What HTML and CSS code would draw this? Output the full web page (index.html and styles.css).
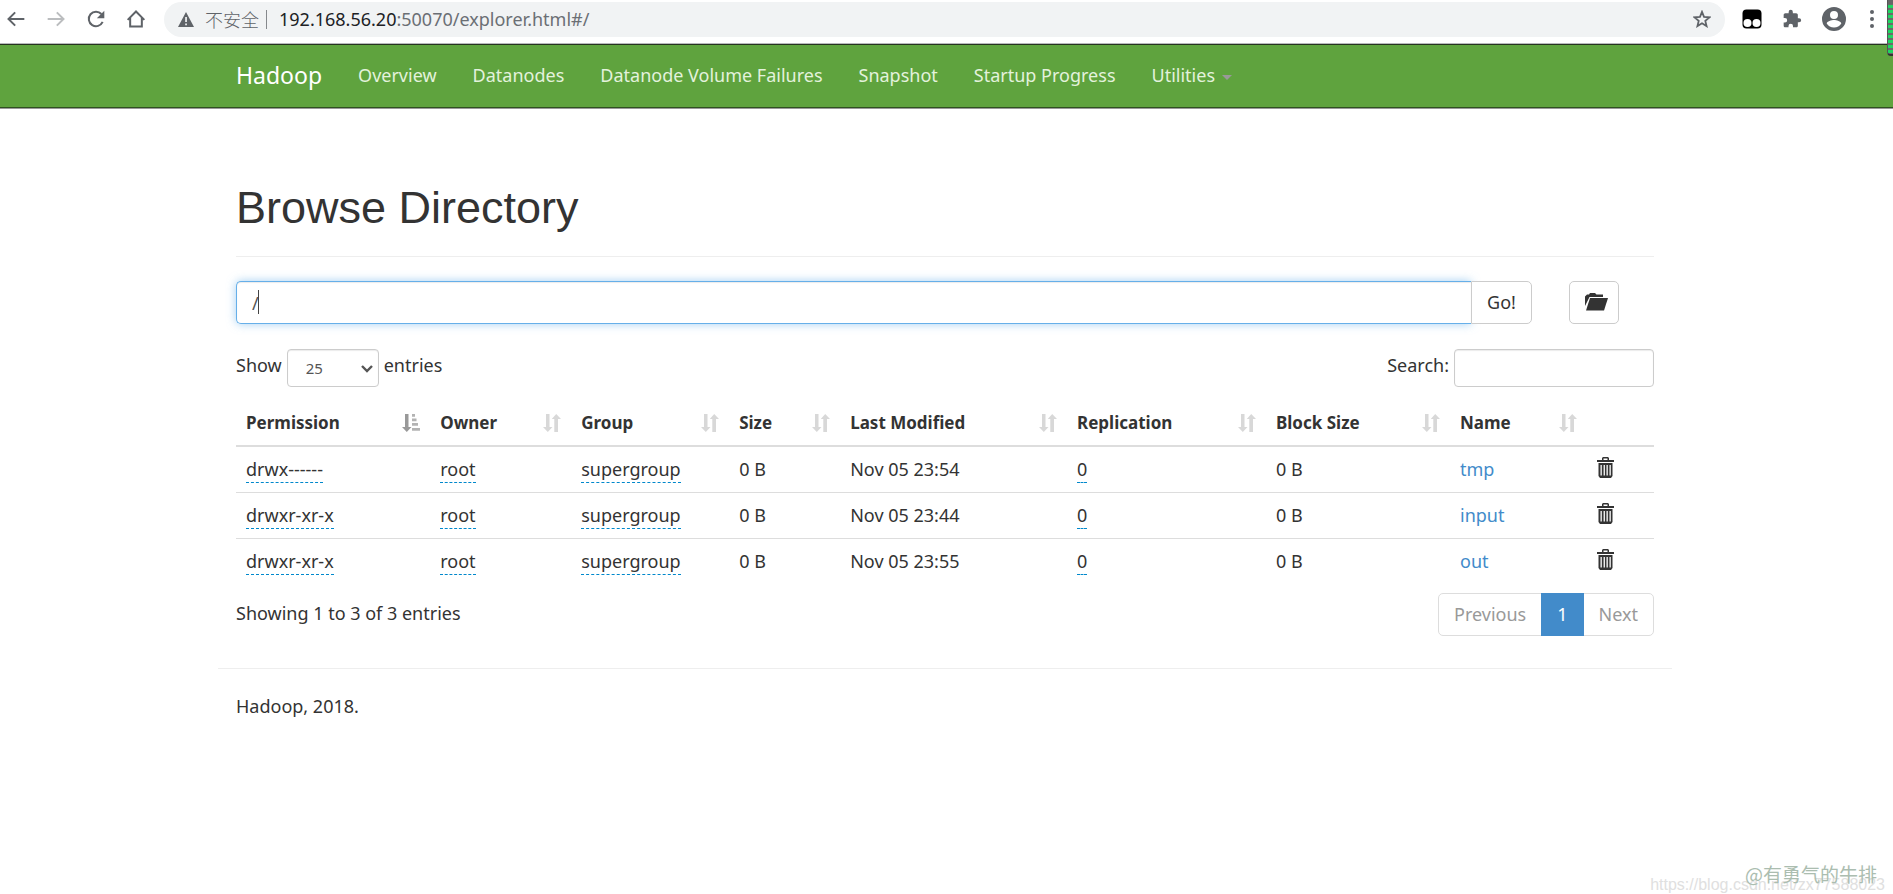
FILE: index.html
```html
<!DOCTYPE html>
<html lang="en">
<head>
<meta charset="utf-8">
<title>Browsing HDFS</title>
<link rel="stylesheet" href="styles.css">
</head>
<body>
<svg width="0" height="0" class="defs" aria-hidden="true">
  <symbol id="sort" viewBox="0 0 18 18"><path d="M3 0h3.500v13H9.500L4.800 18 0 13h3zM11.300 18h3.700V5h3L13.200 0 8.800 5h2.500z"/></symbol>
  <symbol id="sort-asc" viewBox="0 0 18 18"><path d="M3 0h3.500v13H9.500L4.800 18 0 13h3z"/><path opacity=".75" d="M10 0h3v2.800h-3zM10 4.500h4.500v2.800H10zM10 9h6v2.800h-6zM10 14h8v2.800h-8z"/></symbol>
  <symbol id="trash" viewBox="0 0 17 21"><path d="M6 0h5l1 1v2h5v2H0V3h5V1zM6.500 1.500V3h4V1.500zM1.500 6h14v13l-1.500 2H3l-1.500-2zM3.500 8v10.500h1.300V8zM6.600 8v10.500h1.300V8zM9.500 8v10.500h1.300V8zM12.500 8v10.500h1.300V8z" fill-rule="evenodd"/></symbol>
</svg>
<header class="browser">
  <button class="tool" aria-label="Back"><svg width="20" height="20" viewBox="0 0 24 24" class="line"><path d="M22 12H3M11 4l-8 8 8 8"/></svg></button>
  <button class="tool off" aria-label="Forward"><svg width="20" height="20" viewBox="0 0 24 24" class="line"><path d="M2 12h19M13 4l8 8-8 8"/></svg></button>
  <button class="tool" aria-label="Reload"><svg width="20" height="20" viewBox="0 0 24 24"><path class="line" d="M20 15.500A8.700 8.700 0 1 1 18.500 6"/><path d="M22 2v9h-9z"/></svg></button>
  <button class="tool" aria-label="Home"><svg width="20" height="20" viewBox="0 0 24 24" class="line"><path d="M2 13L12 3l10 10M5 10.500V21h14V10.500"/></svg></button>
  <div class="omnibox">
    <svg class="warn" width="16" height="15" viewBox="0 0 16 15"><path fill-rule="evenodd" d="M8 0l8 15H0zM7.200 5v5h1.700V5zM7.200 11.500v1.800h1.700v-1.800z"/></svg>
    <span class="insecure">不安全</span><span class="bar"></span>
    <a class="url" href="#/"><b>192.168.56.20</b>:50070/explorer.html#/</a>
    <button class="star" aria-label="Bookmark"><svg width="18" height="18" viewBox="0 0 24 24" class="line"><path d="M12 2.500l2.700 6.700 7.200.6-5.500 4.700 1.700 7L12 17.700l-6.100 3.800 1.700-7-5.500-4.700 7.200-.6z"/></svg></button>
  </div>
  <div class="extensions">
    <button class="tool" aria-label="Tampermonkey"><svg width="20" height="20" viewBox="0 0 20 20"><rect x=".5" y=".5" width="19" height="19" rx="4" fill="#000"/><circle cx="5.500" cy="14" r="4" fill="#fff"/><circle cx="14.500" cy="14" r="4" fill="#fff"/></svg></button>
    <button class="tool" aria-label="Extensions"><svg width="20" height="20" viewBox="0 0 24 24"><path d="M20.500 11H19V7c0-1.100-.9-2-2-2h-4V3.500a2.500 2.500 0 0 0-5 0V5H4c-1.100 0-2 .9-2 2v3.800h1.500a2.700 2.700 0 0 1 0 5.400H2V20c0 1.100.9 2 2 2h3.800v-1.500a2.700 2.700 0 0 1 5.400 0V22H17c1.100 0 2-.9 2-2v-4h1.500a2.500 2.500 0 0 0 0-5z"/></svg></button>
    <button class="tool" aria-label="Profile"><svg width="24" height="24" viewBox="0 0 24 24"><path fill-rule="evenodd" d="M12 0a12 12 0 1 0 0 24 12 12 0 0 0 0-24zM12 4a4 4 0 1 1 0 8 4 4 0 0 1 0-8zM12 20.500a8.500 8.500 0 0 1-7.300-4.100c.1-2.300 4.900-3.500 7.300-3.500s7.200 1.200 7.300 3.500a8.500 8.500 0 0 1-7.300 4.100z"/></svg></button>
    <button class="tool" aria-label="Menu"><svg width="4" height="18" viewBox="0 0 4 18"><circle cx="2" cy="2" r="2"/><circle cx="2" cy="9" r="2"/><circle cx="2" cy="16" r="2"/></svg></button>
  </div>
  <div class="meter"></div>
</header>
<div class="page">
<nav class="navbar">
  <div class="container">
    <a class="brand" href="#">Hadoop</a>
    <a href="#">Overview</a>
    <a href="#">Datanodes</a>
    <a href="#">Datanode Volume Failures</a>
    <a href="#">Snapshot</a>
    <a href="#">Startup Progress</a>
    <a href="#">Utilities <span class="caret"></span></a>
  </div>
</nav>
<div class="content">
<main class="container">
  <h1>Browse Directory</h1>
  <form class="path">
    <div class="path-box"><input type="text" value="/" aria-label="Directory"><span class="cursor"></span></div>
    <button type="button" class="go">Go!</button>
    <button type="button" class="folder" aria-label="Create directory"><svg width="23" height="18" viewBox="0 0 23 18"><path d="M0 13V3.500L2 1.500h2L5 0h5l1.500 1.500H18V4H4.500z"/><path d="M5 5h18l-4 12.500H1z"/></svg></button>
  </form>
  <div class="controls">
    <div><label for="len">Show</label> <span class="select"><select id="len"><option>25</option></select><svg width="12" height="8" viewBox="0 0 12 8" class="line"><path d="M1 1l5 5 5-5"/></svg></span> <label for="len">entries</label></div>
    <div><label for="search">Search:</label> <input id="search" type="search"></div>
  </div>
  <table>
    <colgroup><col class="c1"><col class="c2"><col class="c3"><col class="c4"><col class="c5"><col class="c6"><col class="c7"><col class="c8"><col class="c9"></colgroup>
    <thead><tr>
      <th><div class="head">Permission<svg class="sorted"><use href="#sort-asc"/></svg></div></th>
      <th><div class="head">Owner<svg><use href="#sort"/></svg></div></th>
      <th><div class="head">Group<svg><use href="#sort"/></svg></div></th>
      <th><div class="head">Size<svg><use href="#sort"/></svg></div></th>
      <th><div class="head">Last Modified<svg><use href="#sort"/></svg></div></th>
      <th><div class="head">Replication<svg><use href="#sort"/></svg></div></th>
      <th><div class="head">Block Size<svg><use href="#sort"/></svg></div></th>
      <th><div class="head">Name<svg><use href="#sort"/></svg></div></th>
      <th></th>
    </tr></thead>
    <tbody>
      <tr><td><span class="edit">drwx------</span></td><td><span class="edit">root</span></td><td><span class="edit">supergroup</span></td><td>0 B</td><td>Nov 05 23:54</td><td><span class="edit">0</span></td><td>0 B</td><td><a href="#/tmp">tmp</a></td><td><button class="trash" aria-label="Delete tmp"><svg><use href="#trash"/></svg></button></td></tr>
      <tr><td><span class="edit">drwxr-xr-x</span></td><td><span class="edit">root</span></td><td><span class="edit">supergroup</span></td><td>0 B</td><td>Nov 05 23:44</td><td><span class="edit">0</span></td><td>0 B</td><td><a href="#/input">input</a></td><td><button class="trash" aria-label="Delete input"><svg><use href="#trash"/></svg></button></td></tr>
      <tr><td><span class="edit">drwxr-xr-x</span></td><td><span class="edit">root</span></td><td><span class="edit">supergroup</span></td><td>0 B</td><td>Nov 05 23:55</td><td><span class="edit">0</span></td><td>0 B</td><td><a href="#/out">out</a></td><td><button class="trash" aria-label="Delete out"><svg><use href="#trash"/></svg></button></td></tr>
    </tbody>
  </table>
  <div class="summary">
    <span>Showing 1 to 3 of 3 entries</span>
    <div class="pager"><a href="#">Previous</a><a href="#" class="current">1</a><a href="#">Next</a></div>
  </div>
</main>
<footer class="container">Hadoop, 2018.</footer>
</div>
</div>
<div class="watermark"><span class="link">https://blog.csdn.net/zx77588023</span><span class="author">@有勇气的牛排</span></div>
</body>
</html>
```

FILE: styles.css
```css
* { box-sizing: border-box; }
body { margin: 0; min-height: 100vh; position: relative; background: #fff; color: #333; font: 18px/25px "Noto Sans", "Open Sans", "Noto Sans CJK SC", sans-serif; }
button, input, select { font: inherit; color: inherit; }
button { background: none; border: 0; padding: 0; }
a { color: #428bca; text-decoration: none; }
svg { display: block; fill: currentColor; }
.defs { position: absolute; }
.line { fill: none; stroke: currentColor; stroke-width: 2.4; }

.browser { position: relative; display: flex; align-items: center; gap: 20px; height: 43px; padding: 0 19px 5px 6px; color: #5f6368; }
.tool { flex: none; }
.off { color: #bbbdbf; }
.omnibox { flex: 1; display: flex; align-items: center; height: 35px; margin-left: -2px; padding: 0 14px; border-radius: 18px; background: #f1f3f4; }
.insecure { margin-left: 11px; font: 300 18px/25px "Noto Sans CJK SC", sans-serif; }
.bar { width: 1px; height: 19px; margin: 0 12px 0 7px; background: #85888c; }
.url { color: #6b6f74; }
.url b { color: #202124; font-weight: 400; }
.star { margin-left: auto; }
.extensions { display: flex; align-items: center; gap: 20px; margin-left: -3px; }
.extensions .tool:last-child { margin-left: 4px; }
.meter { position: absolute; top: 0; right: 0; width: 6px; height: 56px; z-index: 2; border-left: 1px solid #555; border-bottom: 2px solid #333; border-radius: 0 0 0 4px; background: linear-gradient(#666 4px, transparent 4px), repeating-linear-gradient(#1ed760 0 3px, #6a6a6a 3px 5px); }

.navbar { border: solid #2f5220; border-width: 1px 0; border-top-color: #26341f; background: #5fa33e; box-shadow: 0 -1px #b8babc, 0 1px #999; margin-top: 1px; padding-right: 3px; }
.content { padding-right: 3px; }
.container { width: calc(100% - 36px); max-width: 1454px; margin: 0 auto; padding: 0 18px; }
.navbar .container { display: flex; gap: 36px; align-items: center; height: 62px; padding-bottom: 1px; }
.navbar a { color: #e3f2dc; white-space: nowrap; }
.navbar .brand { color: #fff; font-size: 23px; }
.caret { display: inline-block; margin-left: 2px; border: 5px solid transparent; border-top-color: #999; border-bottom: 0; vertical-align: middle; }

h1 { margin: 75px 0 24px; padding-bottom: 23px; border-bottom: 1px solid #eee; font: 400 45px/50px "Liberation Sans", Arial, sans-serif; }
.path { display: flex; margin-right: 35px; }
.path-box { position: relative; flex: 1; z-index: 1; }
.path-box input { display: block; width: 100%; height: 43px; padding: 0 15px; border: 1px solid #66afe9; border-right: 0; border-radius: 5px 0 0 5px; outline: 0; color: #555; box-shadow: inset 0 1px 1px rgba(0,0,0,.08), 0 0 10px rgba(102,175,233,.6); }
.cursor { position: absolute; left: 22px; top: 9px; width: 1px; height: 24px; background: #444; }
.go { position: relative; z-index: 2; height: 43px; width: 61px; border: 1px solid #ccc; border-radius: 0 5px 5px 0; padding-bottom: 1px; background: #fff; }
.folder { display: grid; place-items: center; width: 50px; height: 43px; margin-left: 37px; padding-bottom: 2px; padding-left: 4px; border: 1px solid #ccc; border-radius: 5px; }
.controls { display: flex; justify-content: space-between; margin-top: 25px; }
.controls > div { display: flex; gap: 5px; line-height: 32px; }
.select { position: relative; }
.select svg { position: absolute; right: 6px; top: 16px; color: #555; pointer-events: none; }
.controls select { display: block; appearance: none; width: 92px; height: 38px; padding: 0 18px; border: 1px solid #ccc; border-radius: 4px; background: #fff; color: #555; font-size: 15px; box-shadow: inset 0 1px 1px rgba(0,0,0,.08); }
.controls input { width: 200px; height: 38px; border: 1px solid #ccc; border-radius: 4px; box-shadow: inset 0 1px 1px rgba(0,0,0,.08); }

table { width: 100%; margin-top: 13px; border-collapse: separate; border-spacing: 0; table-layout: fixed; }
.c1 { width: 13.7%; } .c2 { width: 9.94%; } .c3 { width: 11.14%; } .c4 { width: 7.83%; } .c5 { width: 16%; } .c6 { width: 14.03%; } .c7 { width: 12.98%; } .c8 { width: 9.66%; } .c9 { width: 4.72%; }
th, td { padding: 10px; text-align: left; white-space: nowrap; }
th { border-bottom: 2px solid #ddd; font-size: 17px; }
.head { display: flex; justify-content: space-between; align-items: center; }
.head svg { width: 18px; height: 18px; color: #d8d8d8; }
.head .sorted { color: #999; }
td { height: 46px; border-bottom: 1px solid #ddd; }
tbody tr:last-child td { border-bottom-color: transparent; }
.edit { border-bottom: 1px dashed #08c; padding-bottom: 1px; }
.trash { display: block; padding-bottom: 4px; }
.trash svg { width: 17px; height: 21px; }
.summary { display: flex; justify-content: space-between; margin-top: 8px; line-height: 40px; }
.pager { display: flex; height: 43px; border: 1px solid #ddd; border-radius: 5px; }
.pager a { padding: 0 15px; color: #999; }
.pager .current { margin: -1px 0; padding: 1px 16px; background: #428bca; color: #fff; }
footer.container { margin-top: 32px; padding-top: 25px; border-top: 1px solid #eee; }

.watermark { position: absolute; right: 8px; bottom: 0; font: 16px/18px "Liberation Sans", sans-serif; color: #e0e0e0; }
.author { position: absolute; right: 8px; bottom: 10px; color: #abbdb0; font: 19px/20px "Noto Sans CJK SC", sans-serif; white-space: nowrap; }
```
